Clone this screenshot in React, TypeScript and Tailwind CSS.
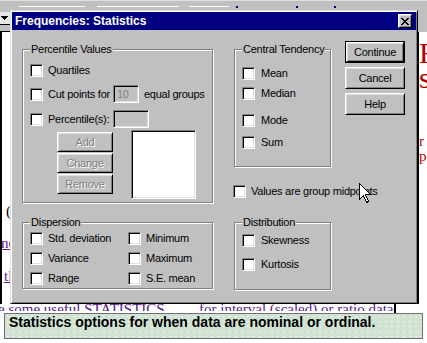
import React from 'react';

const sunken =
  'border border-t-[#808080] border-l-[#808080] border-b-white border-r-white shadow-[inset_1px_1px_0_#000,inset_-1px_-1px_0_#dfdfdf]';
const raised =
  'border border-t-white border-l-white border-b-black border-r-black shadow-[inset_1px_1px_0_#dfdfdf,inset_-1px_-1px_0_#808080]';

function Box() {
  return <span className={`block h-[13px] w-[13px] shrink-0 bg-white ${sunken}`} />;
}

function Check({ label, wide, className = '' }: { label: string; wide?: boolean; className?: string }) {
  return (
    <div className={`flex h-[13px] items-center ${wide ? 'gap-[6px]' : 'gap-[5px]'} ${className}`}>
      <Box />
      <span className="whitespace-nowrap">{label}</span>
    </div>
  );
}

function Group({ title, className = '', children }: { title: string; className?: string; children: React.ReactNode }) {
  return (
    <fieldset className={`border border-[#808080] pl-[7px] shadow-[inset_1px_1px_0_#fff,1px_1px_0_#fff] ${className}`}>
      <legend className="bg-[#c0c0c0] px-[1px] leading-[13px]">{title}</legend>
      {children}
    </fieldset>
  );
}

function Btn({ children, disabled, className = '' }: { children: React.ReactNode; disabled?: boolean; className?: string }) {
  return (
    <div
      className={`flex items-center justify-center bg-[#c0c0c0] ${raised} ${
        disabled ? 'text-[#808080] [text-shadow:1px_1px_0_#fff]' : ''
      } ${className}`}
    >
      {children}
    </div>
  );
}

function Dialog() {
  return (
    <div className="flex h-[294px] w-[408px] flex-col border border-t-[#dfdfdf] border-l-[#dfdfdf] border-b-black border-r-black bg-[#c0c0c0] p-[1px] shadow-[inset_1px_1px_0_#fff,inset_-1px_-1px_0_#808080]">
      {/* title bar */}
      <div className="flex h-[18px] items-center bg-[#000080] pl-[3px] pr-[4px]">
        <span className="text-[12px] font-bold tracking-normal text-white">Frequencies: Statistics</span>
        <div className={`ml-auto flex h-[14px] w-[14px] items-center justify-center bg-[#c0c0c0] ${raised}`}>
          <svg width="8" height="7" viewBox="0 0 8 7" shapeRendering="crispEdges">
            <path
              d="M0 0h2v1H0zM6 0h2v1H6zM1 1h2v1H1zM5 1h2v1H5zM2 2h4v1H2zM3 3h2v1H3zM2 4h4v1H2zM1 5h2v1H1zM5 5h2v1H5zM0 6h2v1H0zM6 6h2v1H6z"
              fill="#000"
            />
          </svg>
        </div>
      </div>

      {/* client area */}
      <div className="flex items-start pl-[10px]">
        {/* left column */}
        <div className="mt-[13px] flex w-[191px] flex-col">
          <Group title="Percentile Values" className="w-[191px] pb-[3px]">
            <div className="flex flex-col">
              <Check label="Quartiles" className="mt-[8px]" />
              <div className="mt-[8px] flex h-[18px] items-center">
                <Box />
                <span className="ml-[5px] w-[65px] whitespace-nowrap">Cut points for</span>
                <span className={`flex h-[18px] w-[26px] items-center bg-[#c0c0c0] pl-[3px] text-[#808080] ${sunken}`}>10</span>
                <span className="ml-[5px] whitespace-nowrap">equal groups</span>
              </div>
              <div className="mt-[7px] flex h-[18px] items-center">
                <Box />
                <span className="ml-[5px] w-[65px] whitespace-nowrap">Percentile(s):</span>
                <span className={`h-[18px] w-[36px] bg-[#c0c0c0] ${sunken}`} />
              </div>
              <div className="mt-[2px] flex items-start">
                <div className="ml-[27px] mt-[2px] flex flex-col gap-[1px]">
                  <Btn disabled className="h-[20px] w-[56px]">Add</Btn>
                  <Btn disabled className="h-[20px] w-[56px]">Change</Btn>
                  <Btn disabled className="h-[20px] w-[56px]">Remove</Btn>
                </div>
                <div className={`ml-[18px] h-[69px] w-[65px] bg-white ${sunken}`} />
              </div>
            </div>
          </Group>

          <Group title="Dispersion" className="mt-[13px] w-[191px] pb-[3px]">
            <div className="mt-[3px] grid grid-cols-[98px_auto] gap-y-[7px]">
              <Check label="Std. deviation" />
              <Check label="Minimum" />
              <Check label="Variance" />
              <Check label="Maximum" />
              <Check label="Range" />
              <Check label="S.E. mean" />
            </div>
          </Group>
        </div>

        {/* middle column */}
        <div className="ml-[21px] mt-[13px] flex w-[97px] flex-col">
          <Group title="Central Tendency" className="w-[97px] pb-[17px]">
            <div className="flex flex-col">
              <Check wide label="Mean" className="mt-[11px]" />
              <Check wide label="Median" className="mt-[7px]" />
              <Check wide label="Mode" className="mt-[14px]" />
              <Check wide label="Sum" className="mt-[9px]" />
            </div>
          </Group>
          <Check label="Values are group midpoints" className="ml-[-1px] mt-[18px]" />
          <Group title="Distribution" className="mt-[18px] w-[97px] pb-[18px]">
            <div className="flex flex-col">
              <Check wide label="Skewness" className="mt-[5px]" />
              <Check wide label="Kurtosis" className="mt-[11px]" />
            </div>
          </Group>
        </div>

        {/* buttons */}
        <div className="ml-[14px] mt-[11px] flex w-[60px] flex-col gap-[4px]">
          <div className="flex h-[22px] w-[60px] border border-black">
            <Btn className="flex-1">Continue</Btn>
          </div>
          <Btn className="h-[22px] w-[60px]">Cancel</Btn>
          <Btn className="h-[22px] w-[60px]">Help</Btn>
        </div>
      </div>
    </div>
  );
}

export default function App() {
  return (
    <div className="relative h-[343px] w-[427px] overflow-hidden bg-white font-['Liberation_Sans',Arial,sans-serif] text-[11px] leading-[13px] tracking-[-0.25px] text-black">
      {/* browser toolbar remnant */}
      <div className="flex h-[10px] flex-col bg-[#c0c0c0]">
        <div className="h-[1px] bg-[#dfdfdf]" />
        <div className="mt-[5px] flex h-[2px] items-start">
          <div className="ml-[19px] h-[1px] w-[66px] bg-white" />
          <div className="ml-[12px] h-[1px] w-[82px] bg-white" />
          <div className="ml-[10px] h-[1px] w-[40px] bg-white" />
          <div className="ml-[7px] h-[2px] w-[2px] bg-[#000060]" />
          <div className="ml-[58px] h-[2px] w-[2px] bg-[#000060]" />
          <div className="ml-[36px] h-[2px] w-[2px] bg-[#000060]" />
        </div>
      </div>

      <div className="flex h-[294px]">
        {/* left page edge */}
        <div className="flex w-[10px] flex-col">
          <div className="h-[2px] bg-[#c0c0c0]" />
          <div className="flex h-[12px] items-center bg-[#e8e8e8] pl-[1px]">
            <svg width="7" height="4" viewBox="0 0 7 4" shapeRendering="crispEdges">
              <path d="M0 0h7L3.5 4z" fill="#000" />
            </svg>
          </div>
          <div className="h-[1px] bg-black" />
          <div className="h-[6px] bg-[#c0c0c0]" />
          <div className="h-[1px] bg-black" />
          <div className="flex flex-1 flex-col overflow-hidden whitespace-nowrap border-l-2 border-black font-['Liberation_Serif',serif] text-[15px] leading-[15px] tracking-normal">
            <span className="ml-[4px] mt-[172px]">(</span>
            <span className="ml-[-1px] mt-[17px] text-[#551a8b] underline">ne</span>
            <span className="ml-[2px] mt-[18px] text-[#551a8b] underline">tl</span>
          </div>
        </div>

        <Dialog />

        {/* right page edge */}
        <div className="flex w-[9px] flex-col">
          <div className="h-[22px] bg-[#c0c0c0]" />
          <div className="flex flex-1 flex-col overflow-hidden whitespace-nowrap border-l border-black font-['Liberation_Serif',serif] tracking-normal text-[#b00000]">
            <span className="mt-[8px] text-[30px] leading-[25px]">
              R<br />s
            </span>
            <span className="mt-[44px] text-[15px] leading-[15px]">
              r<br />p-
            </span>
          </div>
        </div>
      </div>

      {/* cut off page text */}
      <div className="flex h-[9px] items-start">
        <div className="h-[7px] w-[394px] overflow-hidden whitespace-nowrap font-['Liberation_Serif',serif] text-[15px] leading-[15px] tracking-normal text-[#551a8b]">
          <div className="mt-[-2px]">
            <span className="ml-[-2px] inline-block w-[201px]">e some useful STATISTICS</span>
            <span>for interval (scaled) or ratio data</span>
          </div>
        </div>
        <div className="h-[9px] w-[2px] bg-black" />
      </div>

      {/* caption */}
      <div className="px-[4px]">
        <div className="flex h-[26px] items-start border border-[#707070] bg-[#d3e3d3] bg-[radial-gradient(#eef6f0_0.7px,transparent_1px),radial-gradient(#b9d2c0_0.7px,transparent_1px)] bg-[length:6px_5px,7px_4px] pl-[4px] pt-[1px] text-[14px] font-bold leading-[14px] tracking-normal">
          Statistics options for when data are nominal or ordinal.
        </div>
      </div>

      {/* mouse pointer */}
      <svg className="absolute left-[359px] top-[183px]" width="12" height="21" viewBox="0 0 12 21" shapeRendering="crispEdges">
        <path d="M0.5 0.5V16.5L4.5 12.5L7.5 19.5L9.5 18.5L6.5 11.5H11.5Z" fill="#fff" stroke="#000" strokeWidth="1" />
      </svg>
    </div>
  );
}
